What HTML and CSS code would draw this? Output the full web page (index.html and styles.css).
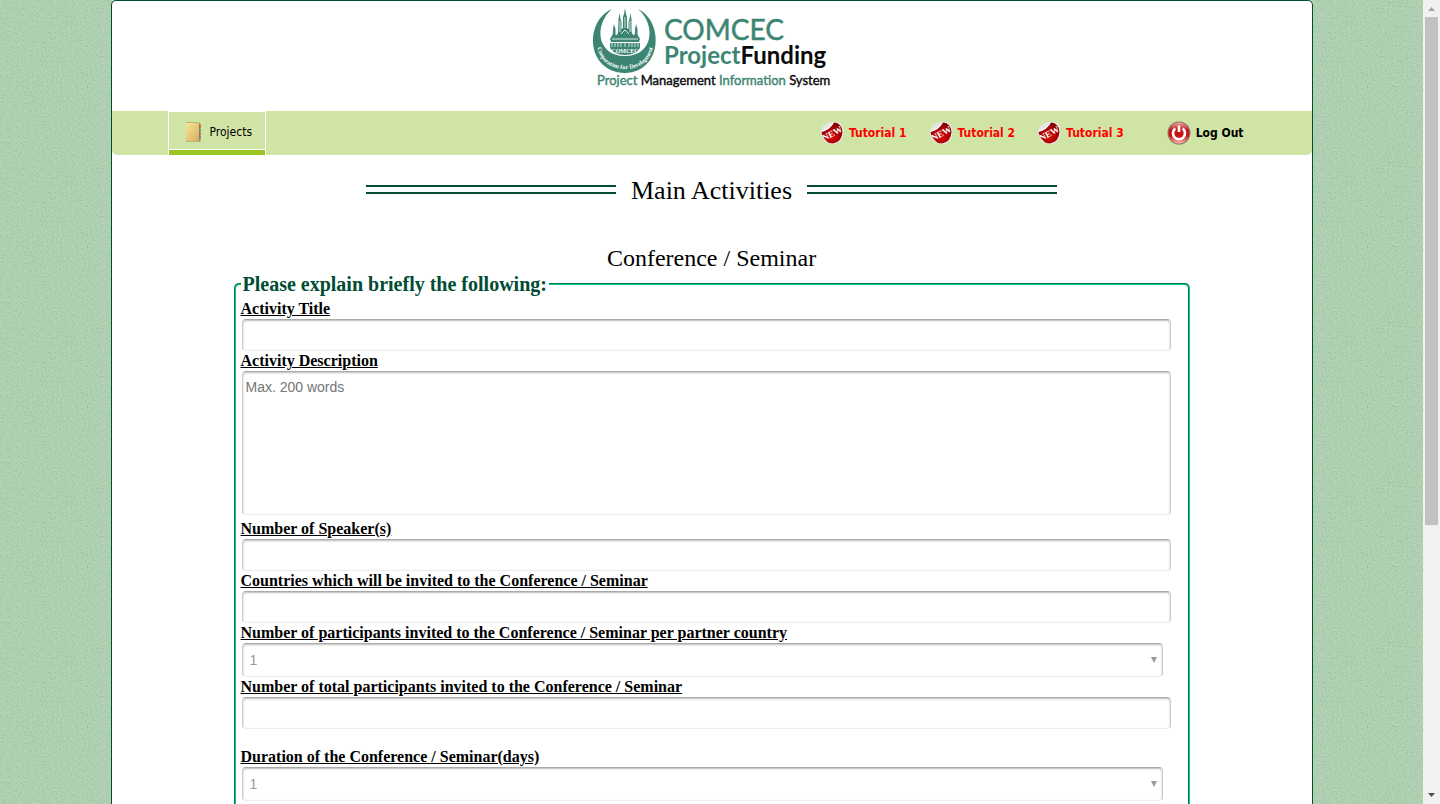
FILE: index.html
```html
<!DOCTYPE html>
<html lang="en">
<head>
<meta charset="utf-8">
<meta name="viewport" content="width=device-width, initial-scale=1">
<title>COMCEC Project Funding - Main Activities</title>
<link rel="stylesheet" href="styles.css">
</head>
<body>
<svg width="0" height="0" class="defs" aria-hidden="true">
  <defs>
    <radialGradient id="red" cx="50%" cy="65%" r="60%"><stop offset="0" stop-color="#e00808"/><stop offset="1" stop-color="#850000"/></radialGradient>
    <linearGradient id="power" x1="0" y1="0" x2="0" y2="1"><stop offset="0" stop-color="#f0aaa0"/><stop offset=".35" stop-color="#c01a1a"/><stop offset=".65" stop-color="#c81414"/><stop offset="1" stop-color="#ffc0b8"/></linearGradient>
    <linearGradient id="note" x1="0" y1="0" x2="1" y2="1"><stop offset="0" stop-color="#fbe88f"/><stop offset="1" stop-color="#d3ae63"/></linearGradient>
    <symbol id="new" viewBox="0 0 24 24">
      <path d="M.5 10Q8 8 12.500 .8Q23 0 23.500 10Q24 21 14 23.500Q2 23 .5 10Z" fill="#f5f5f0" stroke="#d5d8ce" stroke-width=".6"/>
      <path d="M1.500 11Q10 9 14 1.500Q22 2 22.500 11Q22 21 13 22.500Q3 22 1.500 11Z" fill="url(#red)"/>
      <path d="M.5 10Q3 2 12.500 .8Q12 4 10 5.500Q5 9 .5 10Z" fill="#e4e6e4"/>
      <path d="M2 10Q8 8.500 13 2.500" fill="none" stroke="#fff"/>
      <text x="12" y="15.500" text-anchor="middle" transform="rotate(-29 12 12)" class="new-text">NEW</text>
    </symbol>
  </defs>
</svg>
<div class="shell">
  <div class="viewport">
    <div class="page">
      <header class="header">
        <svg class="logo" viewBox="0 0 240 84" role="img" aria-label="COMCEC Project Funding">
          <defs><path id="arc" d="M4 32Q6 61.500 33 62Q60 61.500 62 32"/></defs>
          <path d="M20 2C-8 14-6 65 33 66C71 65 72 14 46 2C64 17 62 49 33 49C4 49 2 17 20 2Z" fill="#3d8573"/>
          <text class="motto"><textPath href="#arc" startOffset="50%" text-anchor="middle">Cooperation for Development</textPath></text>
          <g fill="#3d8573">
            <path d="M32 7L33 1L34 7L35 10V27H31V10ZM26.500 12L27.500 6L28.500 12L29.500 15V28H26ZM37.500 12L38.500 6L39.500 12V28H36.500V15ZM21 22L22 17L23.500 22V32H20.500ZM43 22L44 17L45.500 22V32H42.500Z"/>
            <path d="M18 32L21 27L25 28L27 24Q33 17 39 24L41 28L45 27L48 32L47 35H19Z"/>
            <path d="M18 36H48V41Q44 48 33 48Q22 48 18 41Z"/>
          </g>
          <path d="M20 36V40M23 36V40M26 35V40M29 36V40M33 35V40M37 36V40M40 35V40M43 36V40M46 36V40M20 32H46M29 27L33 23L37 27M28 14V25M33 10V21M38 14V25" fill="none" stroke="#fff" stroke-width=".8"/>
          <text x="33" y="46" text-anchor="middle" class="crest">COMCEC</text>
          <text x="72" y="33" class="brand green">COMCEC</text>
          <text x="72" y="57" class="brand2 green">Project<tspan class="black">Funding</tspan></text>
          <text x="5" y="78" class="tagline green">Project <tspan class="ink">Management</tspan> Information <tspan class="ink">System</tspan></text>
        </svg>
      </header>
      <nav class="nav">
        <a class="tab" href="#projects">
          <svg width="16" height="20" viewBox="0 0 16 20" aria-hidden="true"><path d="M1 .5H14L15.500 2V19.500H1Z" fill="#9b8655"/><path d="M15 3V6M15 11V13" stroke="#b64b2f"/><path d="M15 7V10M15 14V17" stroke="#4b8a78"/><rect x="1" y="1" width="13" height="18" fill="url(#note)"/></svg>
          <span>Projects</span>
        </a>
        <div class="links">
          <a class="tutorial" href="#tutorial1"><svg class="ico" aria-hidden="true"><use href="#new"/></svg>Tutorial 1</a>
          <a class="tutorial" href="#tutorial2"><svg class="ico" aria-hidden="true"><use href="#new"/></svg>Tutorial 2</a>
          <a class="tutorial" href="#tutorial3"><svg class="ico" aria-hidden="true"><use href="#new"/></svg>Tutorial 3</a>
          <a class="logout" href="#logout"><svg class="ico" viewBox="0 0 24 24" aria-hidden="true"><circle cx="12" cy="12" r="11.500" fill="#8f7770"/><circle cx="12" cy="12" r="10.500" fill="url(#power)"/><path d="M8.300 7.500A6 6 0 1 0 15.700 7.500M12 4.500V11" fill="none" stroke="#fff" stroke-width="2.600"/></svg>Log Out</a>
        </div>
      </nav>
      <main class="content">
        <h1 class="title"><span>Main Activities</span></h1>
        <h2 class="subtitle">Conference / Seminar</h2>
        <form>
          <fieldset class="group">
            <legend>Please explain briefly the following:</legend>
            <label for="f1">Activity Title</label>
            <input class="field" id="f1" type="text">
            <label for="f2">Activity Description</label>
            <textarea class="field area" id="f2" placeholder="Max. 200 words"></textarea>
            <label for="f3">Number of Speaker(s)</label>
            <input class="field" id="f3" type="text">
            <label for="f4">Countries which will be invited to the Conference / Seminar</label>
            <input class="field" id="f4" type="text">
            <label for="f5">Number of participants invited to the Conference / Seminar per partner country</label>
            <div class="pick"><select class="field" id="f5"><option>1</option><option>2</option><option>3</option></select></div>
            <label for="f6">Number of total participants invited to the Conference / Seminar</label>
            <input class="field last" id="f6" type="text">
            <label for="f7">Duration of the Conference / Seminar(days)</label>
            <div class="pick"><select class="field" id="f7"><option>1</option><option>2</option><option>3</option></select></div>
          </fieldset>
        </form>
      </main>
    </div>
  </div>
  <div class="scrollbar" aria-hidden="true">
    <svg width="17" height="17" viewBox="0 0 17 17"><path d="M5 11L8.500 7L12 11Z" fill="#a3a3a3"/></svg>
    <div class="track"><div class="thumb"></div></div>
    <svg width="17" height="17" viewBox="0 0 17 17"><path d="M5 6L8.500 10L12 6Z" fill="#505050"/></svg>
  </div>
</div>
</body>
</html>
```
FILE: styles.css
```css
*, *::before, *::after { box-sizing: border-box; }
body { margin: 0; font-family: "Liberation Serif", "Times New Roman", serif; color: #000; }
.defs { position: absolute; }
.shell { display: flex; height: 100vh; }
.viewport {
  flex: 1;
  overflow: hidden;
  background: #b4d5b5 url("data:image/svg+xml,%3Csvg xmlns='http://www.w3.org/2000/svg' width='160' height='160'%3E%3Cfilter id='n' x='0' y='0' width='100%25' height='100%25' color-interpolation-filters='sRGB'%3E%3CfeTurbulence type='fractalNoise' baseFrequency='.8' numOctaves='2' seed='4' stitchTiles='stitch'/%3E%3CfeColorMatrix values='0 0 0 0 .56 0 0 0 0 .72 0 0 0 0 .59 1.8 0 0 0 -.75'/%3E%3C/filter%3E%3Crect width='160' height='160' filter='url(%23n)'/%3E%3C/svg%3E");
}
.page {
  max-width: 1202px;
  min-height: 100%;
  margin: 0 auto;
  border: 1px solid #004d33;
  border-radius: 5px 5px 0 0;
  background: #fff;
}
.header { display: flex; justify-content: center; padding: 6px 0 20px; }
.logo { width: 240px; height: 84px; overflow: visible; font-variant-ligatures: none; }
.green { fill: #3d8573; }
.black { fill: #0a0a0a; }
.ink { fill: #0a0a0a; stroke: #0a0a0a; }
.brand { font: 28px Lato, sans-serif; stroke: #3d8573; stroke-width: .5px; }
.brand2 { font: bold 24px Lato, sans-serif; }
.tagline { font: 13px Lato, sans-serif; stroke: #3d8573; stroke-width: .4px; }
.tagline .ink { stroke: #0a0a0a; }
.motto { font: bold 6px "Liberation Serif", serif; fill: #fff; }
.crest { font: bold 6px "Liberation Serif", serif; fill: #fff; }
.new-text { font: bold 9px "Liberation Serif", serif; fill: #fff; }

.nav {
  display: flex;
  justify-content: space-between;
  height: 44px;
  padding: 0 68px 0 56px;
  border-radius: 0 0 5px 5px;
  background: #d0e4a5;
  font: 12px "DejaVu Sans Condensed", Tahoma, "DejaVu Sans", sans-serif;
  font-stretch: condensed;
}
.nav a { display: flex; align-items: center; text-decoration: none; color: #000; }
.nav .tab {
  gap: 9px;
  padding: 1px 13px 5px 16px;
  border: solid #fff;
  border-width: 1px 1px 0;
  background: linear-gradient(to top, #98c61e 5px, #fff 5px, #fff 6px, transparent 6px);
}
.links { display: flex; gap: 22px; font-weight: bold; }
.links a { gap: 5px; }
.nav .tutorial { color: #f00; }
.logout { margin-left: 21px; }
.ico { width: 24px; height: 24px; }

.content { padding: 18px 121px 0; }
.title {
  display: flex;
  align-items: center;
  justify-content: center;
  gap: 15px;
  margin: 0 0 35px;
  font-size: 26px;
  line-height: 36px;
  font-weight: normal;
}
.title::before, .title::after {
  content: "";
  flex: 0 1 250px;
  height: 9px;
  margin-bottom: 4px;
  border: solid #004d33;
  border-width: 2px 0;
}
.subtitle { margin: 0; font-size: 24px; line-height: 28px; font-weight: normal; text-align: center; }
.group {
  display: flex;
  flex-direction: column;
  margin: 0 1px;
  padding: 3px 17px 10px 5px;
  border: 2px groove #00cc88;
  border-radius: 5px;
}
legend { padding: 0 2px; font-size: 20px; line-height: 24px; font-weight: bold; color: #004d33; }
label { font-size: 16px; line-height: 20px; font-weight: bold; text-decoration: underline; }
.field {
  display: block;
  height: 32px;
  margin: 0 0 0 1px;
  padding: 6px 3px;
  border: 1px solid #ccc;
  border-top-color: #aaa;
  border-bottom-color: #eee;
  border-radius: 4px;
  background: #fff;
  box-shadow: inset 0 1px 2px #bbb;
  font: 14px "Liberation Sans", Arial, sans-serif;
  color: #999;
}
.area { height: 144px; margin-bottom: 4px; padding-top: 7px; resize: none; }
.area::placeholder { color: #757575; }
.last { margin-bottom: 18px; }
.pick { display: grid; margin-right: 8px; }
.pick .field { grid-area: 1 / 1; height: 34px; padding-left: 7px; appearance: none; }
.pick::after {
  content: "";
  grid-area: 1 / 1;
  place-self: center end;
  margin-right: 6px;
  border: solid transparent;
  border-top-color: #999;
  border-width: 6px 3px 0;
  pointer-events: none;
  z-index: 1;
}

.scrollbar { display: flex; flex-direction: column; width: 17px; background: #f1f1f1; }
.track { flex: 1; padding: 0 2px; }
.thumb { height: 66%; background: #c1c1c1; }
```
